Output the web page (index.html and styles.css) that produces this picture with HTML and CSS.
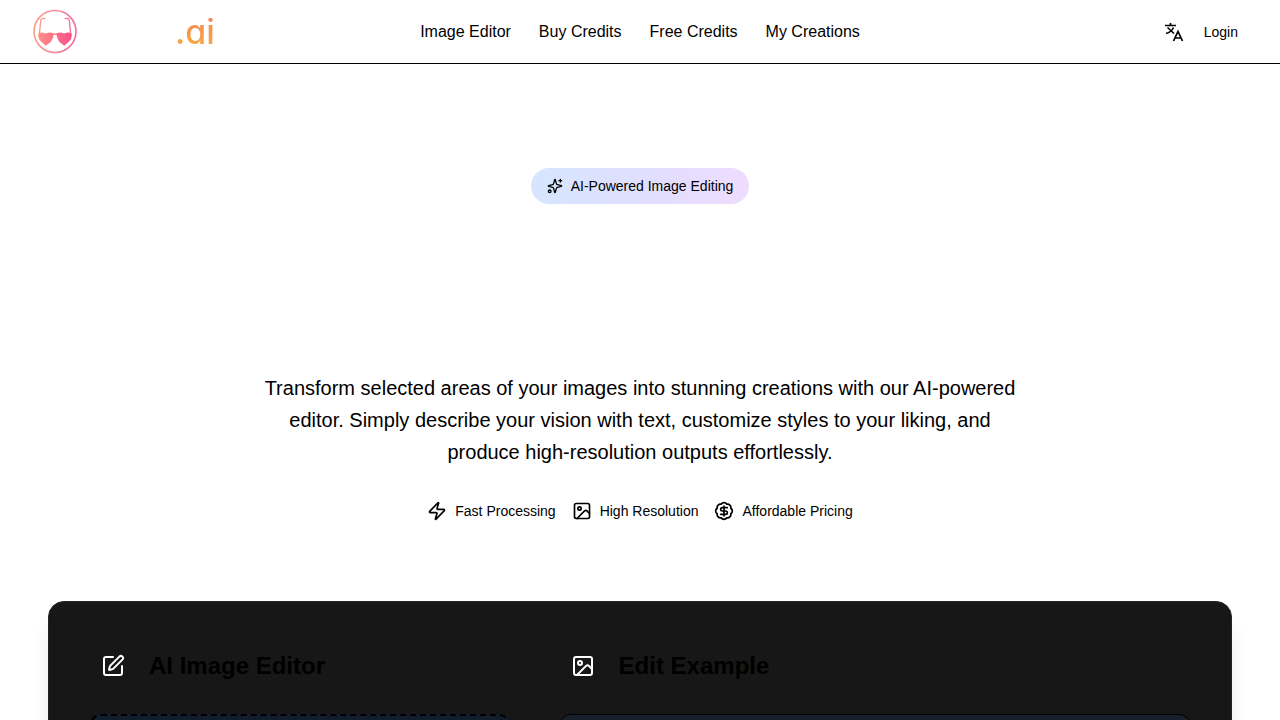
FILE: index.html
```html
<!DOCTYPE html>
<html lang="en">
<head>
    <meta charset="UTF-8">
    <meta name="viewport" content="width=device-width, initial-scale=1.0">
    <title>AI Image Editor</title>
    <link rel="stylesheet" href="styles.css">
</head>
<body>
    <header class="navbar">
        <a href="#" class="logo">
            <svg class="logo-mark" viewBox="0 0 44 44" fill="none">
                <defs>
                    <linearGradient id="pink" x1="0" y1="0" x2="1" y2="0">
                        <stop offset="0" stop-color="#ff9084"/>
                        <stop offset="1" stop-color="#f8508a"/>
                    </linearGradient>
                    <linearGradient id="ring" x1="0" y1="0" x2="1" y2="0">
                        <stop offset="0" stop-color="#f9a08c"/>
                        <stop offset="1" stop-color="#ee6f9f"/>
                    </linearGradient>
                </defs>
                <circle cx="22.500" cy="22" r="20.500" stroke="url(#ring)" stroke-width="1.6"/>
                <path d="M12.500 9.500Q8.500 8 8.500 12L7 26M32.500 9.500Q36.500 8 36.500 12L38 26" stroke="url(#ring)" stroke-width="1.3" stroke-linecap="round"/>
                <path d="M6.500 23.500Q10 22 13.500 24Q17 22 20.500 23.500Q22.500 24.500 24.500 23.500Q28 22 31.500 24Q35 22 38.500 23.500Q39.500 28 37 31L31.500 36L26.500 32Q24.500 29 24 25.500Q22.500 25 21 25.500Q21 29 18.500 32L13.500 36L8 31Q5.500 28 6.500 23.500Z" fill="url(#pink)"/>
            </svg>
            <span class="logo-text">.ai</span>
        </a>
        <nav class="nav-links">
            <a href="#">Image Editor</a>
            <a href="#">Buy Credits</a>
            <a href="#">Free Credits</a>
            <a href="#">My Creations</a>
        </nav>
        <div class="nav-actions">
            <button type="button" class="lang-btn" aria-label="Language">
                <svg viewBox="0 0 20 20" fill="none" stroke="currentColor" stroke-width="1.7">
                    <path d="M1 3.500H12M6.500 1V3.500M3.500 5.500L10 11.500M9.500 5.500Q7.500 10 2 11.500"/>
                    <path d="M9.500 19L14 9.500L18.500 19M11 16H17"/>
                </svg>
            </button>
            <a href="#" class="login">Login</a>
        </div>
    </header>

    <main>
        <section class="hero">
            <div class="badge">
                <svg class="icon icon-sm" viewBox="0 0 24 24">
                    <path d="M9.937 15.500A2 2 0 0 0 8.500 14.063l-6.135-1.582a.5.5 0 0 1 0-.962L8.500 9.936A2 2 0 0 0 9.937 8.500l1.582-6.135a.5.5 0 0 1 .963 0L14.063 8.500A2 2 0 0 0 15.500 9.937l6.135 1.581a.5.5 0 0 1 0 .964L15.500 14.063a2 2 0 0 0-1.437 1.437l-1.582 6.135a.5.5 0 0 1-.963 0z"/>
                    <path d="M20 2v4M22 4h-4"/>
                    <circle cx="4" cy="20" r="2"/>
                </svg>
                <span>AI-Powered Image Editing</span>
            </div>
            <p class="hero-text">Transform selected areas of your images into stunning creations with our AI-powered editor. Simply describe your vision with text, customize styles to your liking, and produce high-resolution outputs effortlessly.</p>
            <ul class="features">
                <li>
                    <svg class="icon" viewBox="0 0 24 24">
                        <path d="M4 14a1 1 0 0 1-.78-1.630l9.900-10.200a.5.5 0 0 1 .86.46l-1.920 6.020A1 1 0 0 0 13 10h7a1 1 0 0 1 .78 1.630l-9.900 10.200a.5.5 0 0 1-.86-.46l1.920-6.020A1 1 0 0 0 11 14z"/>
                    </svg>
                    Fast Processing
                </li>
                <li>
                    <svg class="icon" viewBox="0 0 24 24">
                        <rect x="3" y="3" width="18" height="18" rx="2"/>
                        <circle cx="9" cy="9" r="2"/>
                        <path d="m21 15-3.086-3.086a2 2 0 0 0-2.828 0L6 21"/>
                    </svg>
                    High Resolution
                </li>
                <li>
                    <svg class="icon" viewBox="0 0 24 24">
                        <path d="M3.850 8.620a4 4 0 0 1 4.780-4.770 4 4 0 0 1 6.740 0 4 4 0 0 1 4.780 4.780 4 4 0 0 1 0 6.740 4 4 0 0 1-4.770 4.780 4 4 0 0 1-6.750 0 4 4 0 0 1-4.780-4.770 4 4 0 0 1 0-6.760Z"/>
                        <path d="M16 8h-6a2 2 0 1 0 0 4h4a2 2 0 1 1 0 4H8M12 18V6"/>
                    </svg>
                    Affordable Pricing
                </li>
            </ul>
        </section>

        <section class="editor-card">
            <div class="panel">
                <div class="panel-head">
                    <span class="panel-icon">
                        <svg class="icon icon-lg" viewBox="0 0 24 24">
                            <path d="M12 3H5a2 2 0 0 0-2 2v14a2 2 0 0 0 2 2h14a2 2 0 0 0 2-2v-7"/>
                            <path d="M18.375 2.625a1 1 0 0 1 3 3l-9.013 9.014a2 2 0 0 1-.853.505l-2.873.84a.5.5 0 0 1-.62-.62l.84-2.873a2 2 0 0 1 .506-.852z"/>
                        </svg>
                    </span>
                    <h2>AI Image Editor</h2>
                </div>
                <div class="upload-box"></div>
            </div>
            <div class="panel">
                <div class="panel-head">
                    <span class="panel-icon">
                        <svg class="icon icon-lg" viewBox="0 0 24 24">
                            <rect x="3" y="3" width="18" height="18" rx="2"/>
                            <circle cx="9" cy="9" r="2"/>
                            <path d="m21 15-3.086-3.086a2 2 0 0 0-2.828 0L6 21"/>
                        </svg>
                    </span>
                    <h2>Edit Example</h2>
                </div>
                <div class="example-box"></div>
            </div>
        </section>
    </main>
</body>
</html>
```

FILE: styles.css
```css
* {
    box-sizing: border-box;
}

body {
    margin: 0;
    font-family: "Liberation Sans", Arial, sans-serif;
    font-size: 16px;
    line-height: 24px;
    color: #000;
    background-color: #fff;
}

a {
    color: inherit;
    text-decoration: none;
}

/* Navbar */
.navbar {
    display: grid;
    grid-template-columns: 1fr auto 1fr;
    align-items: center;
    height: 64px;
    padding: 0 32px;
    border-bottom: 1px solid #000;
}

.logo {
    display: flex;
    align-items: center;
    gap: 98px;
}

.logo-mark {
    width: 45px;
    height: 45px;
}

.logo-text {
    font-family: Inter, "Open Sans", sans-serif;
    font-feature-settings: "cv11";
    font-size: 34px;
    font-weight: 500;
    line-height: 44px;
    background: linear-gradient(to top, #fbb040, #f0805a);
    -webkit-background-clip: text;
    background-clip: text;
    color: transparent;
}

.nav-links {
    display: flex;
    gap: 28px;
}

.nav-actions {
    display: flex;
    justify-content: flex-end;
    align-items: center;
    gap: 20px;
    padding-right: 10px;
}

.lang-btn {
    display: flex;
    padding: 0;
    border: none;
    background: none;
    color: #000;
    cursor: pointer;
}

.lang-btn svg {
    width: 20px;
    height: 20px;
}

.login {
    font-size: 14px;
    line-height: 20px;
}

/* Icons */
.icon {
    width: 20px;
    height: 20px;
    flex-shrink: 0;
    fill: none;
    stroke: currentColor;
    stroke-width: 2;
    stroke-linecap: round;
    stroke-linejoin: round;
}

.icon-sm {
    width: 16px;
    height: 16px;
}

.icon-lg {
    width: 24px;
    height: 24px;
}

/* Hero */
.hero {
    display: flex;
    flex-direction: column;
    align-items: center;
    padding: 104px 32px 80px;
}

.badge {
    display: flex;
    align-items: center;
    gap: 8px;
    padding: 8px 16px;
    border-radius: 18px;
    background: linear-gradient(to right, #d6e6fe, #e0dffe, #efdcff);
    font-size: 14px;
    line-height: 20px;
}

.hero-text {
    max-width: 768px;
    margin: 168px 0 33px;
    font-size: 20px;
    line-height: 32px;
    text-align: center;
}

.features {
    display: flex;
    flex-wrap: wrap;
    justify-content: center;
    gap: 16px;
    margin: 0;
    padding: 0;
    list-style: none;
    font-size: 14px;
    line-height: 20px;
}

.features li {
    display: flex;
    align-items: center;
    gap: 8px;
}

/* Editor card */
.editor-card {
    display: grid;
    grid-template-columns: 2fr 3fr;
    gap: 48px;
    margin: 0 48px 48px;
    padding: 40px;
    border: 1px solid #262626;
    border-radius: 16px;
    background-color: #171717;
    box-shadow: 0 20px 25px -5px rgba(0, 0, 0, 0.1);
}

.panel-head {
    display: flex;
    align-items: center;
    gap: 12px;
    margin-bottom: 24px;
}

.panel-icon {
    display: flex;
    padding: 12px;
    color: #fff;
}

.panel-head h2 {
    margin: 0;
    font-size: 24px;
    line-height: 32px;
}

.upload-box,
.example-box {
    height: 400px;
    border: 1px solid #000;
    border-radius: 12px;
    background-color: #18202b;
}

.upload-box {
    border: 2px dashed #000;
    background-color: #111c2c;
}
```
